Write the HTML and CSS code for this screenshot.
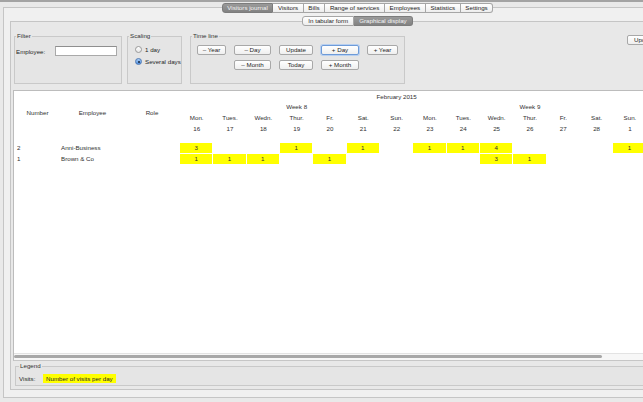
FILE: index.html
```html
<!DOCTYPE html>
<html lang="en">
<head>
<meta charset="utf-8">
<title>Visitors journal</title>
<link rel="stylesheet" href="styles.css">
</head>
<body>
<div class="topline"></div>
<div class="app">
  <nav class="tabs main-tabs">
    <span class="tab first selected">Visitors journal</span>
    <span class="tab">Visitors</span>
    <span class="tab">Bills</span>
    <span class="tab">Range of services</span>
    <span class="tab">Employees</span>
    <span class="tab">Statistics</span>
    <span class="tab last">Settings</span>
  </nav>
  <div class="pane outer">
    <nav class="tabs sub-tabs">
      <span class="tab first">In tabular form</span>
      <span class="tab last selected">Graphical display</span>
    </nav>
    <div class="pane inner">
      <div class="controls">
        <fieldset class="group filter">
          <legend>Filter</legend>
          <div class="field">
            <label class="field-label" for="emp">Employee:</label>
            <input id="emp" class="text-input" type="text">
          </div>
        </fieldset>
        <fieldset class="group scaling">
          <legend>Scaling</legend>
          <div class="radios">
            <label class="radio"><span class="dot"></span>1 day</label>
            <label class="radio"><span class="dot on"></span>Several days</label>
          </div>
        </fieldset>
        <fieldset class="group timeline">
          <legend>Time line</legend>
          <div class="btn-grid">
            <button class="btn w29">– Year</button>
            <button class="btn w37">– Day</button>
            <button class="btn w34">Update</button>
            <button class="btn w38 focus">+ Day</button>
            <button class="btn w31">+ Year</button>
            <button class="btn w37 c2">– Month</button>
            <button class="btn w34">Today</button>
            <button class="btn w38">+ Month</button>
          </div>
        </fieldset>
        <button class="btn update-right">Update</button>
      </div>

      <div class="chart">
        <div class="chart-head">
          <div class="hcell fixed">Number</div>
          <div class="hcell fixed">Employee</div>
          <div class="hcell fixed">Role</div>
          <div class="hcell feb">February 2015</div>
          <div class="hcell"></div>
          <div class="hcell w7">Week 8</div>
          <div class="hcell w7">Week 9</div>
          <div class="hcell">Mon.</div><div class="hcell">Tues.</div><div class="hcell">Wedn.</div><div class="hcell">Thur.</div><div class="hcell">Fr.</div><div class="hcell">Sat.</div><div class="hcell">Sun.</div>
          <div class="hcell">Mon.</div><div class="hcell">Tues.</div><div class="hcell">Wedn.</div><div class="hcell">Thur.</div><div class="hcell">Fr.</div><div class="hcell">Sat.</div><div class="hcell">Sun.</div>
          <div class="hcell">16</div><div class="hcell">17</div><div class="hcell">18</div><div class="hcell">19</div><div class="hcell">20</div><div class="hcell">21</div><div class="hcell">22</div>
          <div class="hcell">23</div><div class="hcell">24</div><div class="hcell">25</div><div class="hcell">26</div><div class="hcell">27</div><div class="hcell">28</div><div class="hcell">1</div>
        </div>
        <div class="chart-body">
          <div class="cell num">2</div><div class="cell name">Anni-Business</div><div class="cell"></div>
          <div class="cell v">3</div><div class="cell"></div><div class="cell"></div><div class="cell v">1</div><div class="cell"></div><div class="cell v">1</div><div class="cell"></div>
          <div class="cell v">1</div><div class="cell v">1</div><div class="cell v">4</div><div class="cell"></div><div class="cell"></div><div class="cell"></div><div class="cell v">1</div>

          <div class="cell num">1</div><div class="cell name">Brown &amp; Co</div><div class="cell"></div>
          <div class="cell v">1</div><div class="cell v">1</div><div class="cell v">1</div><div class="cell"></div><div class="cell v">1</div><div class="cell"></div><div class="cell"></div>
          <div class="cell"></div><div class="cell"></div><div class="cell v">3</div><div class="cell v">1</div><div class="cell"></div><div class="cell"></div><div class="cell"></div>
        </div>
        <div class="hscroll"><div class="thumb"></div></div>
      </div>

      <fieldset class="group legend-box">
        <legend>Legend</legend>
        <div class="legend-row">
          <span class="legend-label">Visits:</span>
          <span class="swatch">Number of visits per day</span>
        </div>
      </fieldset>
    </div>
  </div>
</div>
</body>
</html>
```

FILE: styles.css
```css
* { box-sizing: border-box; }
html, body { margin: 0; padding: 0; }
body {
  width: 643px;
  height: 402px;
  overflow: hidden;
  background: #e9e9e9;
  font-family: "Liberation Sans", Arial, sans-serif;
  font-size: 6.2px;
  color: #262626;
}
.topline { height: 2px; background: #a3a3a3; }
.app {
  width: 715px;
  padding: 1px 3px 0;
  display: flex;
  flex-direction: column;
}

/* segmented tabs */
.tabs {
  display: flex;
  justify-content: center;
  position: relative;
  z-index: 1;
  height: 10px;
}
.tab {
  height: 10px;
  line-height: 8px;
  padding: 0 4.6px;
  border: 1px solid #a6a6a6;
  border-left: none;
  background: linear-gradient(#ffffff, #ededed);
  white-space: nowrap;
  color: #1e1e1e;
}
.sub-tabs .tab { padding: 0 5px; }
.tab.first { border-left: 1px solid #a6a6a6; border-radius: 3px 0 0 3px; }
.tab.last { border-radius: 0 3px 3px 0; }
.tab.selected {
  background: linear-gradient(#9a9a9a, #828282);
  border-color: #7c7c7c;
  color: #f4f4f4;
}

/* panes */
.pane { border: 1px solid #c5c5c5; display: flex; flex-direction: column; }
.outer {
  margin-top: -6px;
  background: #f0f0f0;
  padding: 8px 6px 7px;
}
.inner {
  margin-top: -5px;
  background: #e8e8e8;
  padding: 10px 0 3px 0;
}

/* group boxes */
.group {
  margin: 0;
  padding: 0 3px 0 1px;
  border: 1px solid #c9c9c9;
  background: #e5e5e5;
  min-width: 0;
  flex: none;
}
.group legend {
  padding: 0 1px;
  line-height: 8px;
  color: #333;
}

.controls { display: flex; height: 52px; margin-left: 3px; }
.filter { width: 108px; }
.scaling { width: 55px; margin-left: 5px; padding-right: 0; }
.timeline { width: 215px; margin-left: 8px; }

.field { display: flex; align-items: center; margin-top: 6px; }
.field-label { width: 39px; }
.text-input {
  width: 62px;
  height: 10px;
  margin: 0;
  padding: 0;
  border: 1px solid #a9a9a9;
  border-top-color: #8f8f8f;
  background: #fff;
  font: inherit;
}

.radios { display: flex; flex-direction: column; gap: 3px; margin: 5px 0 0 6px; }
.radio { display: flex; align-items: center; height: 9px; gap: 3px; white-space: nowrap; }
.dot {
  flex: none;
  width: 7px;
  height: 7px;
  border-radius: 50%;
  border: 1px solid #999;
  background: linear-gradient(#ffffff, #e6e6e6);
  display: flex;
  align-items: center;
  justify-content: center;
}
.dot.on {
  border-color: #4f79b3;
  background: linear-gradient(#a9cdf5, #4d8ee0);
}
.dot.on::after {
  content: "";
  width: 2px;
  height: 2px;
  border-radius: 50%;
  background: #17243a;
}

.btn-grid {
  display: grid;
  grid-template-columns: 29px 37px 34px 38px 31px;
  column-gap: 8px;
  row-gap: 5px;
  margin: 5px 0 0 5px;
}
.btn {
  flex: none;
  height: 10px;
  margin: 0;
  padding: 0;
  font: inherit;
  line-height: 8px;
  color: #1e1e1e;
  text-align: center;
  background: linear-gradient(#ffffff, #efefef);
  border: 1px solid #a8a8a8;
  border-radius: 2px;
  white-space: nowrap;
}
.btn.focus { border-color: #6e9bd8; box-shadow: 0 0 0 1px #b7cff0; }
.c2 { grid-column: 2; }
.w29 { width: 29px; }
.w31 { width: 31px; }
.w34 { width: 34px; }
.w37 { width: 37px; }
.w38 { width: 38px; }
.update-right { width: 34px; margin: 3px 0 0 222px; }

/* chart */
.chart {
  margin: 6px 0 0 2px;
  height: 271px;
  background: #fff;
  border-top: 1px solid #bcbcbc;
  border-left: 1px solid #bcbcbc;
  border-bottom: 1px solid #c6c6c6;
  display: flex;
  flex-direction: column;
  overflow: hidden;
}
.chart-head, .chart-body {
  display: grid;
  grid-template-columns: 47px 63px 56px repeat(14, 33.333px);
}
.chart-head { grid-template-rows: 11px 9px 12px 10px; }
.chart-body { grid-template-rows: 11px 11px; margin-top: 10px; }
.hcell {
  display: flex;
  align-items: center;
  justify-content: center;
  white-space: nowrap;
  color: #303030;
}
.hcell.fixed { grid-row: span 4; }
.feb { grid-column: span 13; }
.w7 { grid-column: span 7; }

.cell {
  line-height: 10px;
  border-right: 1px solid #fff;
  border-bottom: 1px solid #fff;
  text-align: center;
  white-space: nowrap;
  color: #303030;
}
.cell.num { text-align: left; padding-left: 3px; }
.cell.name { text-align: left; }
.cell.v { background: #ffff00; }

.hscroll {
  margin-top: auto;
  height: 7px;
  border-top: 1px solid #e3e3e3;
  background: #f7f7f7;
  padding-top: 1px;
}
.thumb {
  width: 588px;
  height: 3px;
  border-radius: 2px;
  background: #a8a8a8;
}

/* legend */
.legend-box { margin: 1px 0 0 4px; height: 24px; padding-left: 3px; }
.legend-row { display: flex; align-items: center; height: 9px; margin-top: 4px; }
.legend-label { width: 24px; }
.swatch {
  height: 9px;
  line-height: 9px;
  padding: 0 3px;
  background: #ffff00;
  color: #262626;
}
```
